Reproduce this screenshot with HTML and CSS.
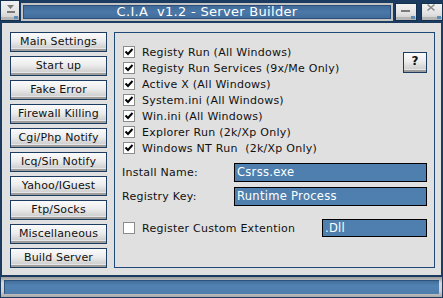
FILE: index.html
```html
<!DOCTYPE html>
<html lang="en">
<head>
  <meta charset="UTF-8" />
  <title>C.I.A v1.2 - Server Builder</title>
  <link rel="stylesheet" href="styles.css">
</head>
<body>
<div class="window">

  <div class="titlebar">
    <div class="tb-btn tb-menu">
      <svg width="20" height="21" viewBox="0 0 20 21">
        <polygon points="7,5 14,5 10.5,9" fill="#7a7a7a" />
        <rect x="7" y="11" width="8" height="2" fill="#7a7a7a" />
      </svg>
    </div>
    <div class="title"><span>C.I.A  v1.2 - Server Builder</span></div>
    <div class="tb-btn tb-min">
      <svg width="22" height="18" viewBox="0 0 22 18">
        <rect x="6" y="7" width="9" height="2" fill="#7a7a7a" />
      </svg>
    </div>
    <div class="tb-btn tb-close">
      <svg width="22" height="18" viewBox="0 0 22 18">
        <path d="M6.5 1.5 L13.5 7.5 M13.5 1.5 L6.5 7.5" stroke="#8a8a8a" stroke-width="1.6" fill="none" />
      </svg>
    </div>
  </div>

  <div class="client">
    <div class="nav">
      <div class="nav-btn">Main Settings</div>
      <div class="nav-btn">Start up</div>
      <div class="nav-btn">Fake Error</div>
      <div class="nav-btn">Firewall Killing</div>
      <div class="nav-btn">Cgi/Php Notify</div>
      <div class="nav-btn">Icq/Sin Notify</div>
      <div class="nav-btn">Yahoo/IGuest</div>
      <div class="nav-btn">Ftp/Socks</div>
      <div class="nav-btn">Miscellaneous</div>
      <div class="nav-btn">Build Server</div>
    </div>

    <div class="panel">
      <div class="top-section">
        <div class="checklist">
          <div class="check-row"><span class="box checked"></span>Registy Run (All Windows)</div>
          <div class="check-row"><span class="box checked"></span>Registy Run Services (9x/Me Only)</div>
          <div class="check-row"><span class="box checked"></span>Active X (All Windows)</div>
          <div class="check-row"><span class="box checked"></span>System.ini (All Windows)</div>
          <div class="check-row"><span class="box checked"></span>Win.ini (All Windows)</div>
          <div class="check-row"><span class="box checked"></span>Explorer Run (2k/Xp Only)</div>
          <div class="check-row"><span class="box checked"></span>Windows NT Run  (2k/Xp Only)</div>
        </div>
        <div class="help-btn">?</div>
      </div>

      <div class="field-row">
        <span class="label">Install Name:</span>
        <div class="input wide">Csrss.exe</div>
      </div>
      <div class="field-row">
        <span class="label">Registry Key:</span>
        <div class="input wide">Runtime Process</div>
      </div>

      <div class="ext-row">
        <div class="check-row"><span class="box"></span>Register Custom Extention</div>
        <div class="input short">.Dll</div>
      </div>
    </div>
  </div>

  <div class="statusbar">
    <div class="status-field"></div>
  </div>

</div>
</body>
</html>
```

FILE: styles.css
```css
    html, body {
      margin: 0;
      padding: 0;
      background: #1b3b60;
    }

    .window {
      width: 443px;
      height: 298px;
      background: #1b3b60;
      display: flex;
      flex-direction: column;
      font-family: 'DejaVu Sans', Verdana, sans-serif;
      font-size: 11px;
      color: #111;
    }

    /* title bar */
    .titlebar {
      height: 23px;
      display: flex;
      align-items: flex-start;
      flex-shrink: 0;
    }
    .tb-btn {
      position: relative;
      box-sizing: border-box;
      background: linear-gradient(#f2f2f2, #e2e2e2 60%, #c9c9c9);
      border: 1px solid #14304f;
      box-shadow: inset 0 -3px 0 #b5b5b5;
    }
    .tb-btn svg {
      display: block;
    }
    .tb-btn::after {
      content: "";
      position: absolute;
      right: 1px;
      bottom: 1px;
      width: 4px;
      height: 3px;
      background: #5e8bb8;
    }
    .tb-menu {
      width: 20px;
      height: 21px;
    }
    .tb-menu svg {
      margin: -1px;
    }
    .tb-min {
      width: 22px;
      height: 18px;
      margin: 3px 0 0 2px;
    }
    .tb-close {
      width: 22px;
      height: 18px;
      margin: 3px 0 0 4px;
    }
    .tb-min svg, .tb-close svg {
      margin: -1px;
    }
    .title {
      flex: 1;
      height: 18px;
      margin-top: 3px;
      margin-left: 1px;
      box-sizing: border-box;
      border: 2px solid #c4c4c4;
      box-shadow: inset 0 0 0 1px #2b4f7a;
      background: linear-gradient(#3d6896, #4b78a8 50%, #3f6b99);
      display: flex;
      align-items: center;
      justify-content: center;
    }
    .title span {
      color: #ffffff;
      font-size: 13px;
      letter-spacing: 0.3px;
      white-space: pre;
      line-height: 14px;
    }

    /* main client area */
    .client {
      flex: 1;
      margin: 0 2px;
      background: #e0e0e0;
      display: flex;
      gap: 7px;
      padding: 9px 6px 7px 8px;
    }

    .nav {
      display: flex;
      flex-direction: column;
      gap: 4px;
      width: 97px;
    }
    .nav-btn {
      box-sizing: border-box;
      height: 20px;
      border: 1px solid #1c3c62;
      background: linear-gradient(#fbfbfb, #ececec 45%, #d2d2d2 80%);
      box-shadow: inset 0 -2px 0 #9c9c9c, inset 0 -3px 0 #e6e6e6;
      text-align: center;
      line-height: 17px;
      color: #111;
      letter-spacing: 0.15px;
      white-space: nowrap;
    }

    .panel {
      flex: 1;
      border: 1px solid #1f4a77;
      padding: 11px 7px 0 8px;
      display: flex;
      flex-direction: column;
    }

    .top-section {
      display: flex;
      justify-content: space-between;
      align-items: flex-start;
    }

    .check-row {
      display: flex;
      align-items: center;
      height: 16px;
      letter-spacing: 0.25px;
      white-space: pre;
    }
    .box {
      box-sizing: border-box;
      width: 12px;
      height: 12px;
      border: 1px solid #8c8c8c;
      background: #ffffff;
      margin-right: 7px;
      flex-shrink: 0;
    }
    .box.checked {
      background: #ffffff url("data:image/svg+xml,%3Csvg xmlns='http://www.w3.org/2000/svg' width='10' height='10' viewBox='0 0 10 10'%3E%3Cpath d='M1.5 4.5 L4 7 L8.5 2' stroke='%23000' stroke-width='2' fill='none'/%3E%3C/svg%3E") center no-repeat;
    }

    .help-btn {
      box-sizing: border-box;
      width: 24px;
      height: 21px;
      margin-top: 8px;
      border: 1px solid #1c3c62;
      background: linear-gradient(#fbfbfb, #ececec 45%, #d2d2d2 80%);
      box-shadow: inset 0 -2px 0 #9c9c9c, inset 0 -3px 0 #e6e6e6;
      font-weight: bold;
      font-size: 12px;
      text-align: center;
      line-height: 17px;
    }

    .field-row {
      display: flex;
      align-items: center;
      margin-top: 5px;
      letter-spacing: 0.25px;
    }
    .top-section + .field-row {
      margin-top: 7px;
    }
    .label {
      width: 112px;
      margin-left: -1px;
    }
    .input {
      box-sizing: border-box;
      height: 19px;
      border: 1px solid #000000;
      background: #4e7fae;
      color: #ffffff;
      padding-left: 2px;
      line-height: 17px;
      font-size: 11.5px;
      letter-spacing: 0.3px;
    }
    .input.wide {
      width: 193px;
    }
    .input.short {
      width: 105px;
      height: 18px;
      line-height: 16px;
    }

    .ext-row {
      display: flex;
      align-items: center;
      justify-content: space-between;
      margin-top: 13px;
    }

    /* status bar */
    .statusbar {
      flex-shrink: 0;
      height: 20px;
      margin: 2px 1px 2px 1px;
      box-sizing: border-box;
      padding: 3px;
      background: linear-gradient(#9a9a9a, #d8d8d8 30%, #d0d0d0 70%, #a8a8a8);
    }
    .status-field {
      height: 14px;
      background: linear-gradient(#3f6a98, #5282b2 40%, #4e7dad);
      box-shadow: inset 1px 1px 0 #2d537f;
    }
```
